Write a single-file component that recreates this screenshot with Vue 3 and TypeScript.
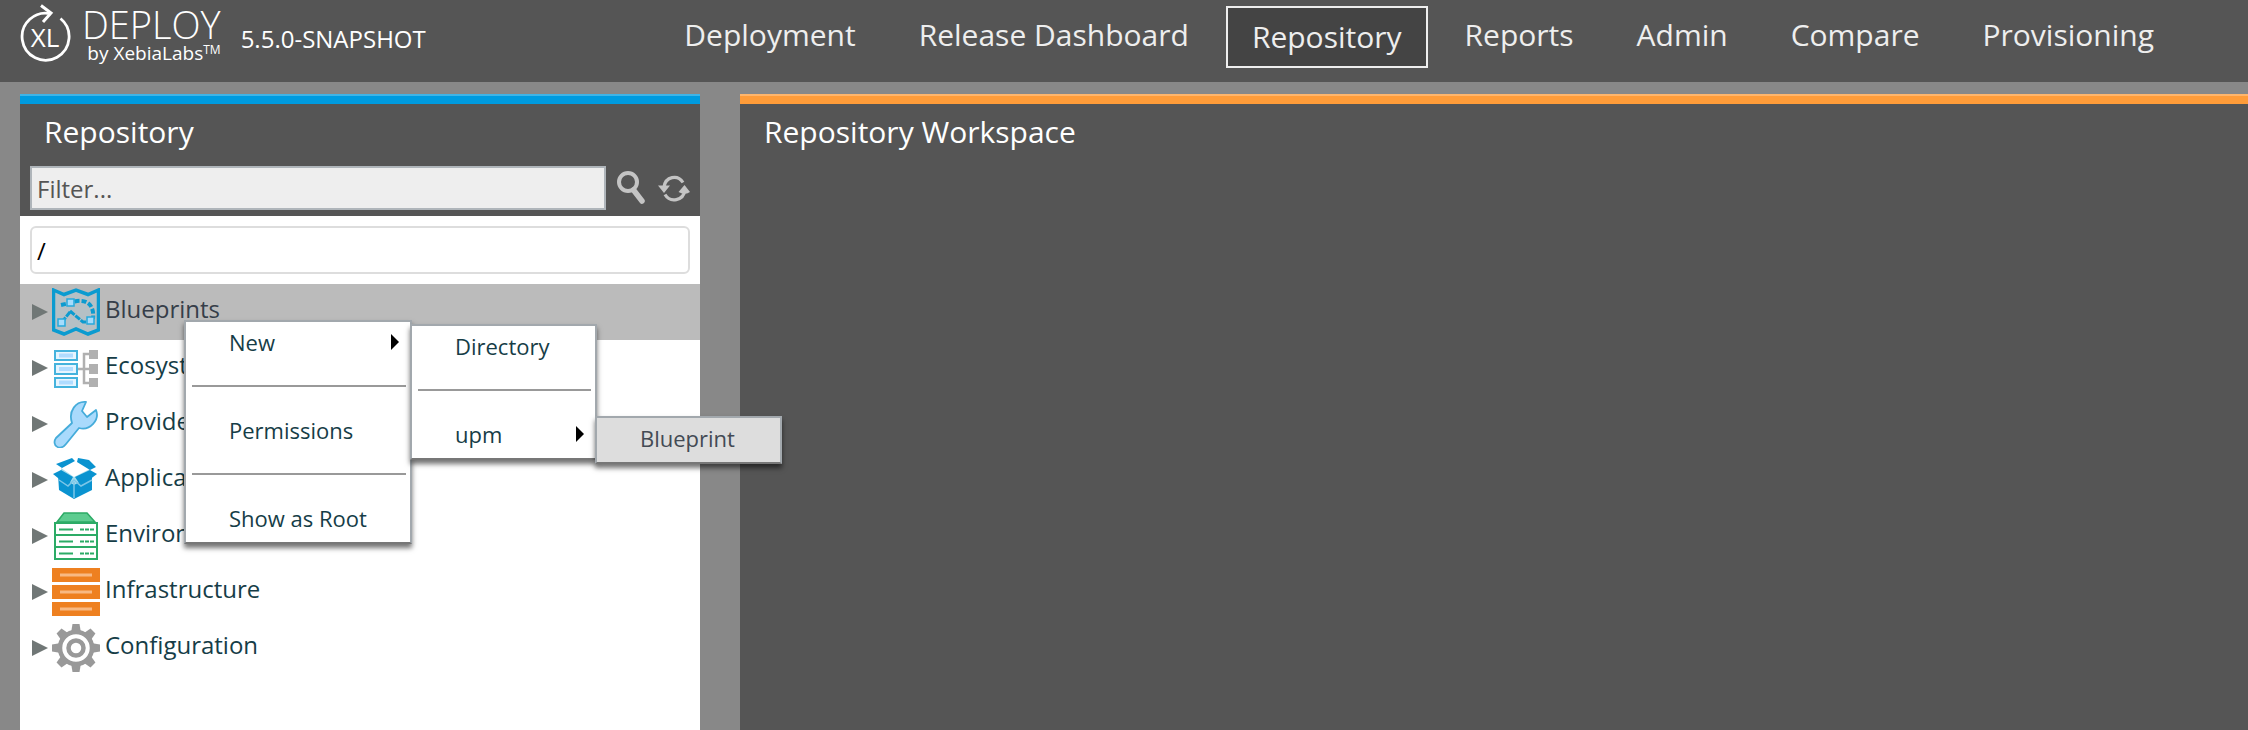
<script setup lang="ts">
import { ref } from 'vue'

interface TreeNode {
  id: string
  label: string
}

const tabs: string[] = ['Deployment', 'Release Dashboard', 'Repository', 'Reports', 'Admin', 'Compare', 'Provisioning']
const activeTab = ref('Repository')

const nodes: TreeNode[] = [
  { id: 'blueprints', label: 'Blueprints' },
  { id: 'ecosystem', label: 'Ecosystem' },
  { id: 'providers', label: 'Providers' },
  { id: 'applications', label: 'Applications' },
  { id: 'environments', label: 'Environments' },
  { id: 'infrastructure', label: 'Infrastructure' },
  { id: 'configuration', label: 'Configuration' },
]
const selected = ref('blueprints')
const filter = ref('')
const path = ref('/')
const teeth: number[] = [0, 45, 90, 135, 180, 225, 270, 315]
</script>

<template>
  <div class="app">
    <header class="topbar">
      <div class="brand">
        <svg class="brand-mark" viewBox="0 0 52 60" aria-hidden="true">
          <path d="M40.500 14.500A23.500 23.500 0 1 1 31 9.800" fill="none" stroke="#fff" stroke-width="2.800" />
          <path d="M21 1.500L31 9L23 18" fill="none" stroke="#fff" stroke-width="3" />
          <text x="25" y="43" text-anchor="middle" fill="#fff" font-size="26">XL</text>
        </svg>
        <div class="brand-words">
          <span class="brand-name">DEPLOY</span>
          <span class="brand-by">by XebiaLabs<span class="tm">TM</span></span>
        </div>
        <span class="version">5.5.0-SNAPSHOT</span>
      </div>
      <nav class="tabs">
        <a
          v-for="tab in tabs"
          :key="tab"
          href="#"
          class="tab"
          :class="{ active: tab === activeTab }"
          @click.prevent="activeTab = tab"
        >{{ tab }}</a>
      </nav>
    </header>

    <main class="panels">
      <section class="panel sidebar">
        <div class="panel-head">
          <h2 class="title">Repository</h2>
          <div class="filter-row">
            <input v-model="filter" class="filter" type="text" placeholder="Filter..." aria-label="Filter" />
            <button class="icon-btn" type="button" aria-label="Search">
              <svg viewBox="0 0 32 36" aria-hidden="true">
                <circle cx="12" cy="12" r="9" fill="none" stroke="#c4c4c4" stroke-width="4" />
                <path d="M17.500 20L26 31" stroke="#c4c4c4" stroke-width="5.500" stroke-linecap="round" />
              </svg>
            </button>
            <button class="icon-btn" type="button" aria-label="Refresh">
              <svg viewBox="0 0 32 36" aria-hidden="true">
                <path d="M6 17C7.500 6.500 19.500 4 25 12.500M27 20C25.500 31 12 33 7 24.500" fill="none" stroke="#c4c4c4" stroke-width="3.200" />
                <path d="M0 15.500L12 15.500L6 23ZM20.500 22L26.500 15L32 22L29 23.500H24Z" fill="#c4c4c4" />
              </svg>
            </button>
          </div>
        </div>
        <div class="path-row">
          <input v-model="path" class="path" type="text" aria-label="Path" />
        </div>
        <ul class="tree">
          <li v-for="node in nodes" :key="node.id">
            <button class="node" type="button" :class="{ selected: node.id === selected }" @click="selected = node.id">
              <svg class="caret" viewBox="0 0 16 16" aria-hidden="true"><path d="M0 0L16 8L0 16Z" fill="#707776" /></svg>

              <svg v-if="node.id === 'blueprints'" class="icon" viewBox="0 0 48 48" aria-hidden="true">
                <path d="M1.500 2L12 6.500L24 2L36 6.500L46.500 2V42L36 46L24 41L12 46L1.500 42Z" fill="#b5c0c5" stroke="#0b9bd0" stroke-width="3.500" />
                <path d="M9 17L18 15C30 10 43 13 41 31" fill="none" stroke="#0b9bd0" stroke-width="4" stroke-dasharray="5 2" />
                <path d="M18 24L10 34M18 23L31 34H38" fill="none" stroke="#0b9bd0" stroke-width="3" stroke-dasharray="6 1" />
                <g fill="#a5dcfc" stroke="#27a9dc" stroke-width="1.500">
                  <rect x="15" y="11" width="7" height="7" /><rect x="6" y="31" width="7" height="7" /><rect x="35" y="29" width="7" height="7" />
                </g>
              </svg>

              <svg v-else-if="node.id === 'ecosystem'" class="icon" viewBox="0 0 48 48" aria-hidden="true">
                <path d="M26 25H39M39 10H32V39H39" fill="none" stroke="#b0b0b0" stroke-width="2.500" />
                <path d="M37 6H46V15H37ZM37 20H46V30H37ZM37 34H46V43H37Z" fill="#b0b0b0" />
                <g fill="#e6f5ff" stroke="#45b3dd" stroke-width="2">
                  <rect x="3" y="7" width="22" height="9" /><rect x="3" y="20" width="22" height="10" /><rect x="3" y="34" width="22" height="9" />
                </g>
                <path d="M7 11.500H21M7 25H21M7 38.500H21" stroke="#b0dcff" stroke-width="4" />
              </svg>

              <svg v-else-if="node.id === 'providers'" class="icon" viewBox="0 0 48 48" aria-hidden="true">
                <path d="M20 23C16 11 24 1 34 2L30 11L35 17L44 10C48 20 38 31 27 28L14 44C8 52 -1 45 4 38Z" fill="#a9dafc" stroke="#45acda" stroke-width="1.800" stroke-linejoin="round" />
              </svg>

              <svg v-else-if="node.id === 'applications'" class="icon" viewBox="0 0 48 48" aria-hidden="true">
                <path d="M6 18L22 28L40 18V34L22 43L7 34Z" fill="#0a93d0" />
                <path d="M10 13L24 8L37 14L22 22Z" fill="#fff" />
                <path d="M9 12L22 21L38 13V21L22 29L9 21Z" fill="#a5dcec" />
                <path d="M4 8L20 2L23 5L10 12ZM26 2L37 4L44 11L38 14L25 6ZM1 18L9 14L21 21L16 30ZM45 18L38 14L23 21L29 30Z" fill="#0a93d0" />
                <path d="M22 26V42M7 24L16 30L22 24L29 30L40 24" fill="none" stroke="#7cc6e8" stroke-width="1.500" />
              </svg>

              <svg v-else-if="node.id === 'environments'" class="icon" viewBox="0 0 48 48" aria-hidden="true">
                <path d="M5 10L12 1H35L43 10Z" fill="#5dcc90" stroke="#2cab66" stroke-width="1.500" />
                <path d="M3 11H45V47H3ZM3 23H45M3 35H45" fill="#fff" stroke="#2cab66" stroke-width="2" />
                <path d="M7 17.500H21M7 29.500H21M7 41.500H21" stroke="#2cab66" stroke-width="2.200" />
                <path d="M28 17.500H42M28 29.500H42M28 41.500H42" stroke="#2cab66" stroke-width="2.200" stroke-dasharray="4 1" />
              </svg>

              <svg v-else-if="node.id === 'infrastructure'" class="icon" viewBox="0 0 48 48" aria-hidden="true">
                <path d="M0 0H48V14H0ZM0 17H48V31H0ZM0 34H48V48H0Z" fill="#ee8020" />
                <path d="M8 7H40M8 24H40M8 41H40" stroke="#f8b983" stroke-width="3" />
              </svg>

              <svg v-else class="icon" viewBox="0 0 48 48" aria-hidden="true">
                <path v-for="angle in teeth" :key="angle" d="M19 9L20.500 0H27.500L29 9Z" fill="#999" :transform="`rotate(${angle} 24 24)`" />
                <circle cx="24" cy="24" r="16" fill="#fff" stroke="#999" stroke-width="4.500" />
                <circle cx="24" cy="24" r="7.500" fill="#fff" stroke="#999" stroke-width="4.500" />
              </svg>

              <span class="node-label">{{ node.label }}</span>
            </button>
          </li>
        </ul>
      </section>

      <section class="panel workspace">
        <div class="panel-head">
          <h2 class="title">Repository Workspace</h2>
        </div>
      </section>
    </main>

    <ul class="menu root-menu" role="menu">
      <li class="item" role="none">
        <button type="button" role="menuitem" aria-haspopup="true">New<i class="more"></i></button>
        <ul class="menu submenu" role="menu">
          <li class="item" role="none"><button type="button" role="menuitem">Directory</button></li>
          <li class="rule" role="separator"></li>
          <li class="item" role="none">
            <button type="button" role="menuitem" aria-haspopup="true">upm<i class="more"></i></button>
            <ul class="menu submenu" role="menu">
              <li class="item hover" role="none"><button type="button" role="menuitem">Blueprint</button></li>
            </ul>
          </li>
        </ul>
      </li>
      <li class="rule" role="separator"></li>
      <li class="item" role="none"><button type="button" role="menuitem">Permissions</button></li>
      <li class="rule" role="separator"></li>
      <li class="item" role="none"><button type="button" role="menuitem">Show as Root</button></li>
    </ul>
  </div>
</template>

<style>
body {
  margin: 0;
  background: #888;
}
</style>

<style scoped>
.app {
  position: relative;
  display: flex;
  flex-direction: column;
  min-height: 100vh;
  overflow: hidden;
  background: #888;
  color: #163d47;
  font-family: "Open Sans", "Noto Sans", sans-serif;
  font-size: 24px;
}
.app,
.app * {
  box-sizing: border-box;
}
button,
input {
  font: inherit;
  color: inherit;
}
button {
  border: 0;
  padding: 0;
  background: none;
  text-align: left;
  cursor: pointer;
}
ul {
  list-style: none;
  margin: 0;
  padding: 0;
}
.topbar {
  display: flex;
  justify-content: space-between;
  align-items: flex-start;
  height: 82px;
  padding: 4px 68px 0 20px;
  background: #555;
  color: #fff;
}
.brand {
  display: flex;
  align-items: flex-start;
}
.brand-mark {
  width: 52px;
  height: 60px;
}
.brand-words {
  display: flex;
  flex-direction: column;
  align-items: flex-end;
  margin-left: 10px;
}
.brand-name {
  font-size: 38px;
  font-weight: 300;
  line-height: 40px;
}
.brand-by {
  font-size: 19px;
  line-height: 16px;
}
.tm {
  font-size: 12px;
  line-height: 12px;
  vertical-align: 6px;
}
.version {
  margin-left: 20px;
  padding-top: 19px;
  line-height: 32px;
}
.tabs {
  display: flex;
  gap: 11px;
  padding-top: 2px;
}
.tab {
  height: 62px;
  padding: 0 24px;
  border: 2px solid transparent;
  color: #eee;
  font-size: 30px;
  line-height: 54px;
  text-decoration: none;
  white-space: nowrap;
}
.tab.active {
  border-color: #eee;
  background: #444;
  line-height: 58px;
}
.panels {
  display: flex;
  flex: 1;
  gap: 40px;
  padding: 12px 0 0 20px;
}
.panel {
  margin-top: 2px;
  border-top: 8px solid #009bdf;
  box-shadow: 0 -2px #40b4e6;
}
.sidebar {
  flex: 0 0 680px;
  background: #fff;
}
.workspace {
  flex: 1;
  border-top-color: #ff9c39;
  box-shadow: 0 -2px #ffb56b;
  background: #555;
}
.panel-head {
  padding: 8px 10px 6px;
  background: #555;
}
.title {
  margin: 0;
  padding: 0 14px;
  color: #fff;
  font-size: 30px;
  font-weight: 400;
  line-height: 40px;
}
.filter-row {
  display: flex;
  align-items: center;
  gap: 10px;
  padding-top: 14px;
}
.filter {
  flex: 1;
  min-width: 0;
  height: 44px;
  padding: 0 5px;
  border: 2px solid #afb5ba;
  background: #eee;
}
.filter::placeholder {
  color: #555;
  opacity: 1;
}
.icon-btn {
  width: 32px;
  height: 36px;
}
.icon-btn svg {
  display: block;
  width: 32px;
  height: 36px;
}
.path-row {
  padding: 10px;
}
.path {
  display: block;
  width: 100%;
  height: 48px;
  padding: 0 5px;
  border: 2px solid #ddd;
  border-radius: 6px;
  background: #fff;
  color: #000;
}
.node {
  display: flex;
  align-items: center;
  width: 100%;
  height: 56px;
  padding-left: 12px;
}
.node.selected {
  background: #bbb;
  color: #363e49;
}
.caret {
  width: 16px;
  height: 16px;
}
.icon {
  width: 48px;
  height: 48px;
  margin: 0 5px 0 4px;
}
.node-label {
  padding-bottom: 6px;
  line-height: 32px;
}
.menu {
  position: absolute;
  z-index: 2;
  border: 2px solid #a2a8ad;
  border-bottom-color: #777;
  background: #fff;
  box-shadow: 0 4px 5px rgba(0, 0, 0, 0.55);
  font-size: 22px;
}
.root-menu {
  left: 184px;
  top: 320px;
  width: 228px;
}
.submenu {
  left: 100%;
  top: 2px;
  width: 187px;
}
.item {
  position: relative;
}
.item button {
  display: flex;
  align-items: center;
  justify-content: space-between;
  width: 100%;
  height: 44px;
  padding: 0 11px 4px 43px;
  white-space: nowrap;
}
.item.hover {
  background: #ddd;
  color: #434a54;
}
.more {
  border: 8px solid transparent;
  border-right-width: 0;
  border-left-color: #000;
}
.rule {
  height: 2px;
  margin: 19px 4px 23px 6px;
  background: #999;
}
</style>
